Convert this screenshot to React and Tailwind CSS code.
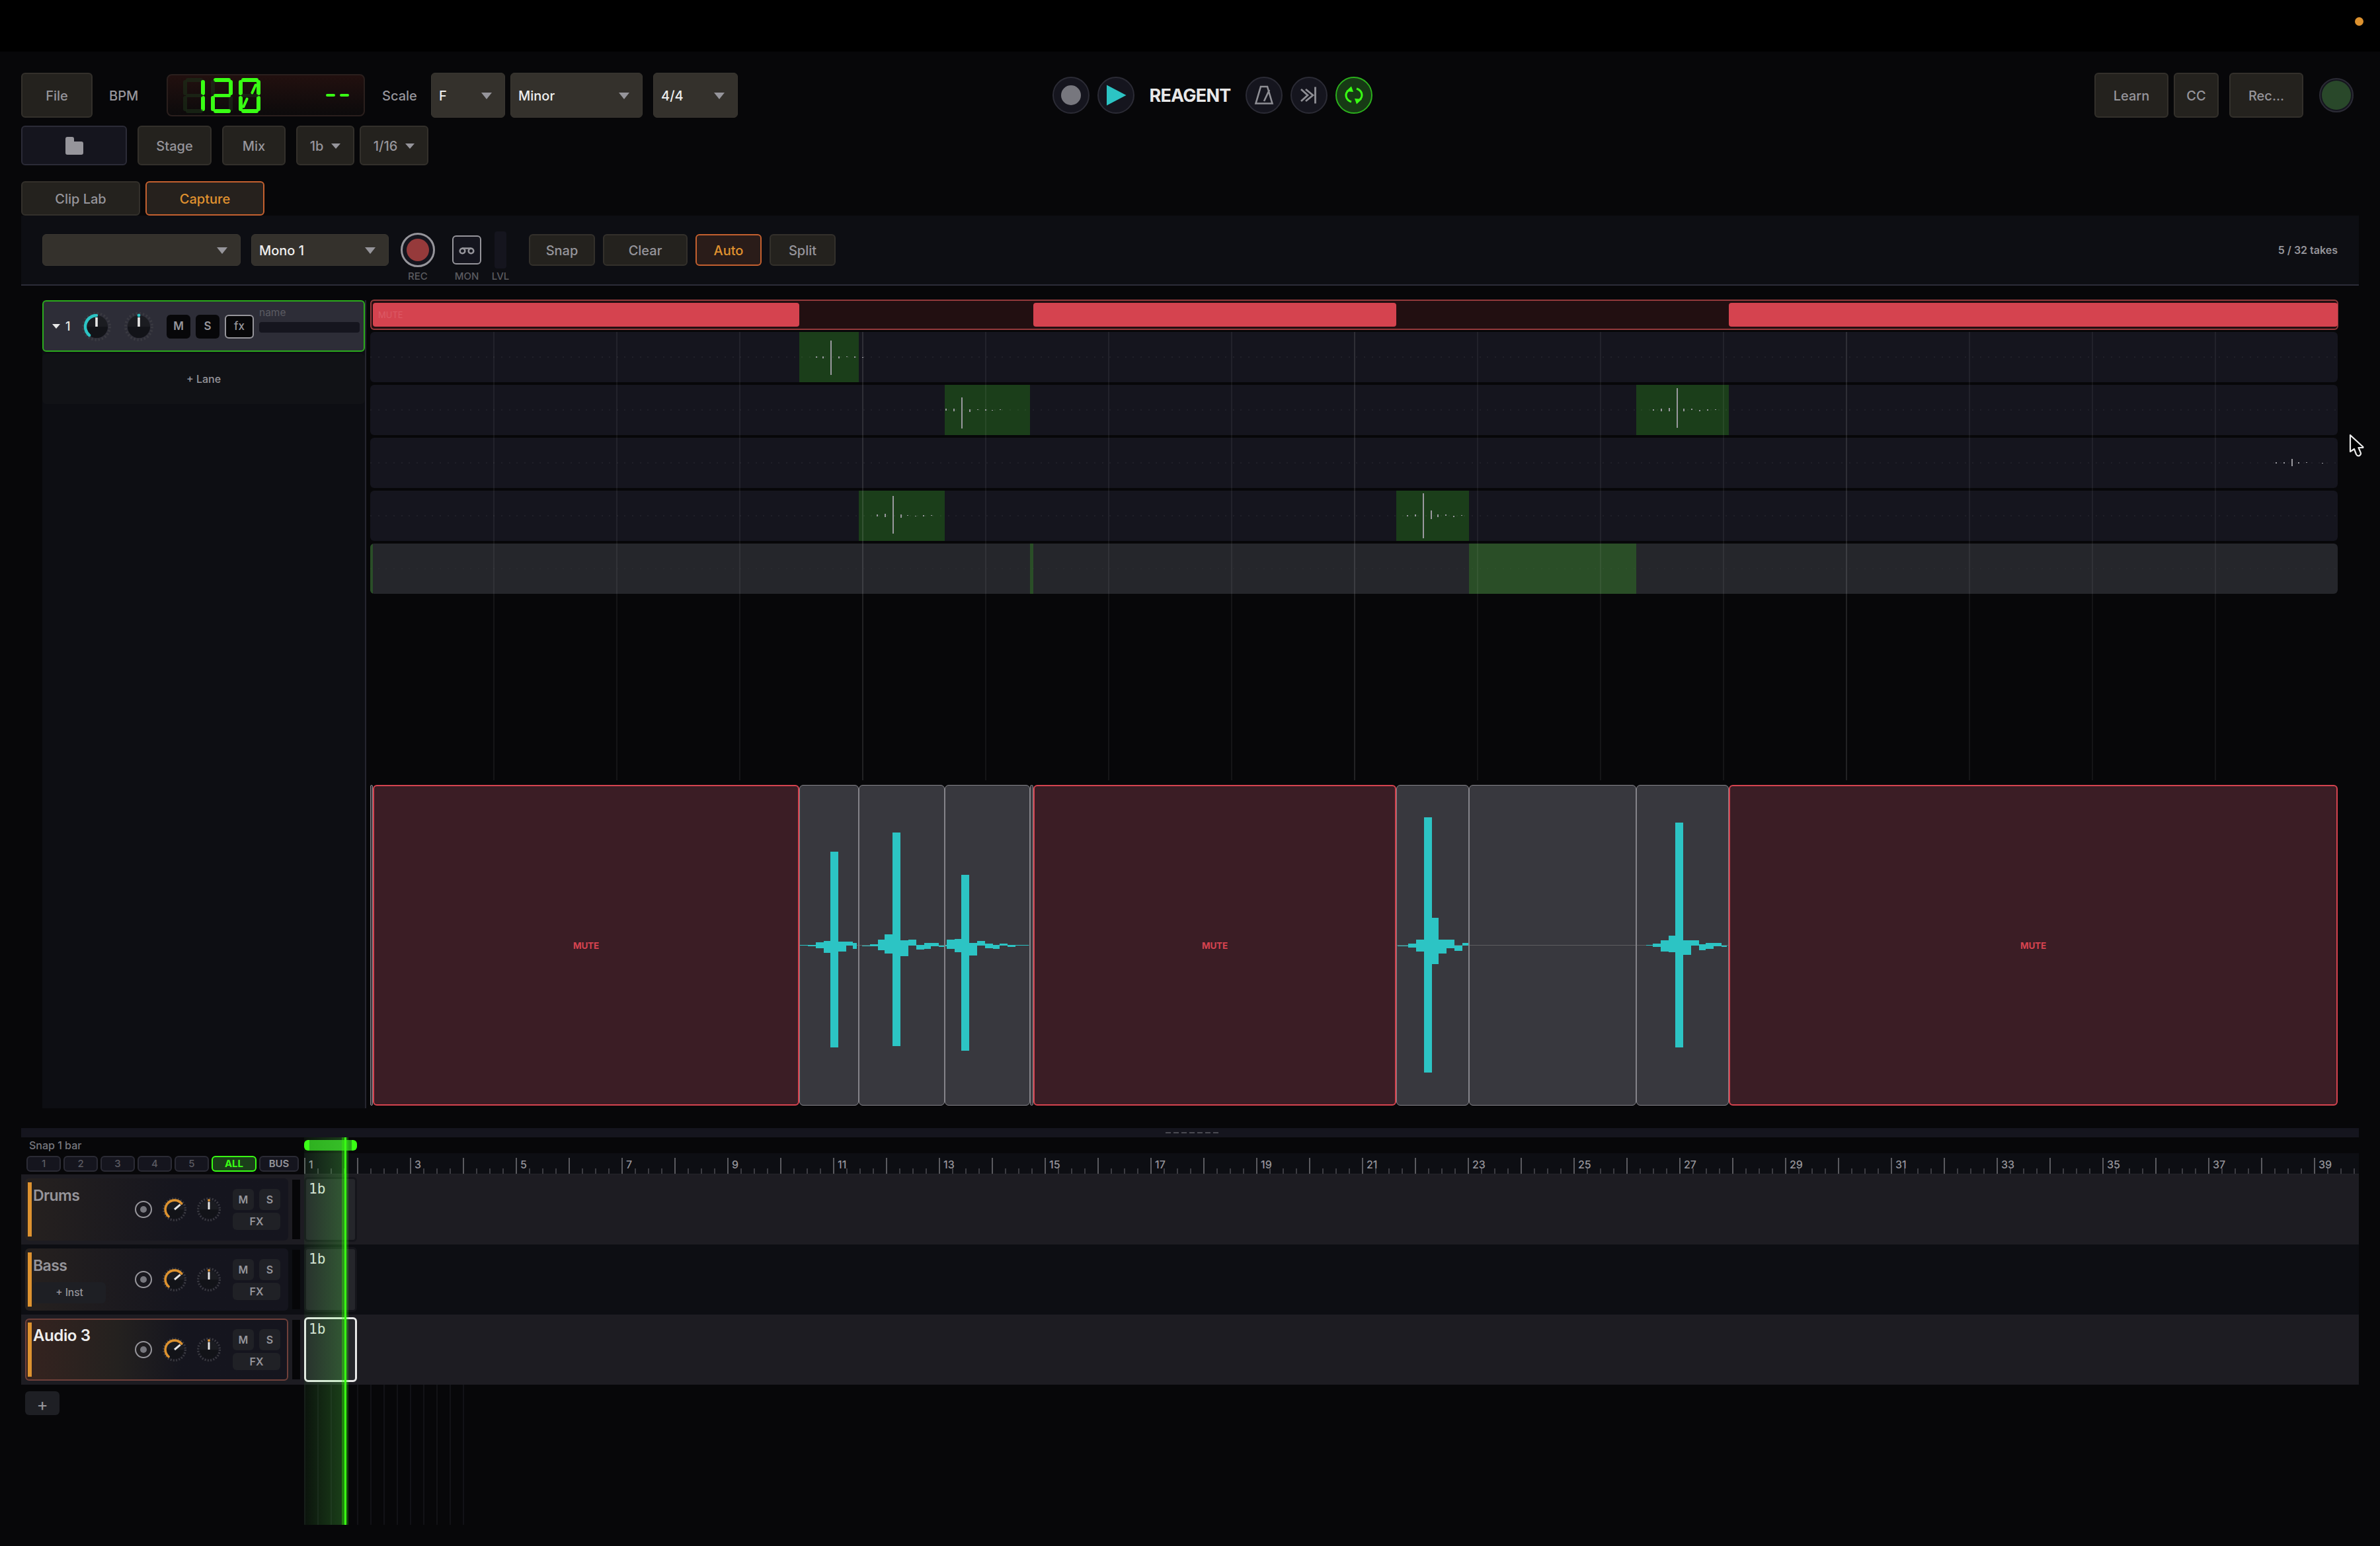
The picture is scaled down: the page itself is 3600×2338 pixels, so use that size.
// widths of the comped regions along the capture timeline
const REGIONS = [
  { width: 4 },
  { width: 645, muted: true },
  { width: 90 },
  { width: 130 },
  { width: 129 },
  { width: 5 },
  { width: 549, muted: true },
  { width: 110 },
  { width: 253 },
  { width: 140 },
  { width: 921, muted: true },
]

const LANE_START = 560
const LANE_WIDTH = 2976

// marks are [x, top offset, height], offsets measured from the lane centre
const TAKES = [
  {
    active: [2],
    marks: [[1234, -1, 2], [1244, -1, 3], [1256, -25, 52], [1268, -1, 3], [1280, -1, 1], [1292, -1, 2], [1304, 0, 1]],
  },
  {
    active: [4, 9],
    marks: [
      [1430, -2, 3], [1442, -2, 4], [1454, -19, 47], [1466, -1, 4], [1478, -1, 1], [1490, -1, 2], [1500, 0, 1], [1512, -1, 1],
      [2500, -1, 2], [2512, -2, 4], [2524, -3, 5], [2536, -33, 60], [2546, -2, 4], [2558, -2, 2], [2570, 0, 2], [2582, -1, 2], [2594, -1, 1],
    ],
  },
  {
    active: [],
    marks: [[3442, -1, 2], [3454, -1, 2], [3466, -6, 11], [3476, -1, 2], [3488, -1, 1], [3512, 0, 1]],
  },
  {
    active: [3, 7],
    marks: [
      [1326, -2, 3], [1338, -3, 5], [1350, -30, 57], [1362, -2, 5], [1372, -1, 1], [1384, 0, 1], [1396, -1, 2], [1408, -1, 1],
      [2128, -1, 2], [2140, -2, 3], [2152, -34, 68], [2164, -8, 13], [2174, -2, 4], [2186, -2, 2], [2198, 0, 2], [2210, -1, 1],
    ],
  },
  { active: [0, 5, 8], marks: [], bright: true },
]

// waveform blocks are [from, to, top, bottom]
const WAVES = {
  2: [
    [1208, 1222, 1429, 1430], [1222, 1234, 1429, 1431], [1234, 1246, 1425, 1434], [1246, 1256, 1423, 1441],
    [1256, 1268, 1288, 1584], [1268, 1280, 1424, 1439], [1280, 1290, 1424, 1430], [1290, 1296, 1426, 1435],
  ],
  3: [
    [1304, 1316, 1430, 1431], [1316, 1328, 1428, 1431], [1328, 1338, 1421, 1437], [1338, 1350, 1413, 1442],
    [1350, 1362, 1259, 1582], [1362, 1374, 1422, 1446], [1374, 1386, 1421, 1430], [1386, 1398, 1429, 1436],
    [1398, 1408, 1426, 1435], [1408, 1420, 1426, 1431], [1420, 1429, 1430, 1432],
  ],
  4: [
    [1429, 1432, 1429, 1431], [1432, 1444, 1421, 1435], [1444, 1454, 1420, 1440], [1454, 1466, 1323, 1589],
    [1466, 1478, 1426, 1445], [1478, 1490, 1423, 1430], [1490, 1502, 1427, 1434], [1502, 1512, 1429, 1435],
    [1512, 1524, 1427, 1430], [1524, 1536, 1429, 1432], [1536, 1556, 1429, 1430],
  ],
  7: [
    [2114, 2130, 1430, 1431], [2130, 2142, 1427, 1433], [2142, 2154, 1421, 1439], [2154, 2166, 1236, 1622],
    [2166, 2176, 1388, 1458], [2176, 2188, 1421, 1442], [2188, 2200, 1421, 1434], [2200, 2212, 1430, 1438],
    [2212, 2222, 1426, 1430],
  ],
  8: [],
  9: [
    [2490, 2500, 1429, 1430], [2500, 2512, 1427, 1432], [2512, 2524, 1422, 1439], [2524, 2534, 1415, 1440],
    [2534, 2546, 1244, 1584], [2546, 2558, 1422, 1444], [2558, 2570, 1422, 1430], [2570, 2580, 1428, 1437],
    [2580, 2592, 1426, 1435], [2592, 2604, 1426, 1431], [2604, 2612, 1430, 1432],
  ],
}

const regionStart = (index) => REGIONS.slice(0, index).reduce((x, region) => x + region.width, LANE_START)

const TRACKS = [
  { name: "Drums" },
  { name: "Bass", inst: true },
  { name: "Audio 3", selected: true },
]

const Button = ({ className = "", children }) => (
  <button
    className={`flex items-center justify-center rounded-md border-2 border-[#33302b] bg-[#24221e] pt-[2px] text-[20px] font-medium text-[#96959b] ${className}`}
  >
    {children}
  </button>
)

const Caret = ({ className = "w-4 h-[10px] fill-[#96959b]" }) => (
  <svg className={`shrink-0 ${className}`} viewBox="0 0 16 10" preserveAspectRatio="none">
    <path d="M0 0h16L8 10z" />
  </svg>
)

const Select = ({ value, className = "" }) => (
  <div
    className={`flex items-center justify-between rounded-md border border-[#3a3731] bg-[#34312c] pt-[2px] pl-[11px] pr-[19px] text-[20px] font-medium text-[#eeeeee] ${className}`}
  >
    <span>{value}</span>
    <Caret />
  </div>
)

const RoundButton = ({ className = "border-[#2b2b35] bg-[#15151e]", children }) => (
  <button className={`flex h-14 w-14 items-center justify-center rounded-full border-2 ${className}`}>
    <svg width="44" height="44" viewBox="-22 -22 44 44" fill="none">
      {children}
    </svg>
  </button>
)

const SEGMENT_CLASSES = {
  a: "left-[4px] top-0 h-[6px] w-[26px]",
  b: "right-0 top-[3px] h-[23px] w-[6px]",
  c: "right-0 bottom-[3px] h-[23px] w-[6px]",
  d: "left-[4px] bottom-0 h-[6px] w-[26px]",
  e: "left-0 bottom-[3px] h-[23px] w-[6px]",
  f: "left-0 top-[3px] h-[23px] w-[6px]",
  g: "left-[4px] top-[24px] h-[5px] w-[26px]",
}

const DIGITS = { 0: "abcdef", 1: "bc", 2: "abdeg" }

const LcdDigit = ({ value }) => (
  <div className="relative h-[53px] w-[33px]">
    {Object.keys(SEGMENT_CLASSES).map((key) => (
      <span
        key={key}
        className={`absolute rounded-[3px] ${SEGMENT_CLASSES[key]} ${DIGITS[value].includes(key) ? "bg-[#39ff14]" : "bg-[#1c3019]/60"}`}
      />
    ))}
    {value === "0" && (
      <>
        <span className="absolute left-[21px] top-[8px] h-[17px] w-[4px] rotate-[24deg] rounded-sm bg-[#39ff14]" />
        <span className="absolute left-[8px] top-[29px] h-[17px] w-[4px] rotate-[24deg] rounded-sm bg-[#39ff14]" />
      </>
    )}
  </div>
)

const Lcd = () => (
  <div
    role="img"
    aria-label="120"
    className="flex h-16 w-[300px] items-center justify-between rounded-lg border-2 border-[#2a1f1d] bg-linear-to-b from-[#22100f] to-[#0c0a0b] pl-[23px] pr-[22px]"
  >
    <div className="flex gap-[9px]">
      {["1", "2", "0"].map((digit) => (
        <LcdDigit key={digit} value={digit} />
      ))}
    </div>
    <div className="flex gap-[7px]">
      <span className="h-[4px] w-[14px] rounded-sm bg-[#39ff14]" />
      <span className="h-[4px] w-[14px] rounded-sm bg-[#39ff14]" />
    </div>
  </div>
)

const polar = (angle, radius) => {
  const rad = (angle * Math.PI) / 180
  return [Math.sin(rad) * radius, -Math.cos(rad) * radius]
}

const Knob = ({ size, angle, color, centered }) => {
  const [sx, sy] = polar(-140, 17)
  const [ex, ey] = polar(angle, 17)
  const [px, py] = polar(angle, 14)
  return (
    <svg width={size} height={size} viewBox="-22 -22 44 44" fill="none" className="shrink-0">
      <circle r="20" stroke="#3a3a41" strokeWidth="4" strokeDasharray="2.4 2.84" />
      <circle r="17" fill="#1b1c21" />
      <path d="M-17 0A17 17 0 0 0 17 0z" fill="#121318" />
      {centered ? (
        <circle cy="-17" r="2.4" fill={color} />
      ) : (
        <path
          d={`M${sx} ${sy}A17 17 0 ${angle > 40 ? 1 : 0} 1 ${ex} ${ey}`}
          stroke={color}
          strokeWidth="4.4"
          strokeLinecap="round"
        />
      )}
      <path d={`M0 0L${px} ${py}`} stroke="#e6e6e6" strokeWidth="3.6" />
    </svg>
  )
}

const Toolbar = () => (
  <div className="mt-8 grid h-[68px] grid-cols-[1560px_1fr_auto] items-center">
    <div className="flex items-center">
      <Button className="h-[68px] w-[108px]">File</Button>
      <span className="w-[112px] pt-[2px] pl-[25px] text-[20px] font-medium text-[#96959b]">BPM</span>
      <Lcd />
      <span className="w-[100px] pt-[2px] pl-[26px] text-[20px] font-medium text-[#96959b]">Scale</span>
      <Select value="F" className="h-[68px] w-[112px]" />
      <Select value="Minor" className="ml-2 h-[68px] w-[200px]" />
      <Select value="4/4" className="ml-4 h-[68px] w-[128px]" />
    </div>

    <div className="flex items-center">
      <RoundButton>
        <circle r="15" fill="#77777e" />
      </RoundButton>
      <div className="ml-3">
        <RoundButton>
          <path d="M-14 -15.5L15.5 0L-14 15.5z" fill="#2cc4c4" />
        </RoundButton>
      </div>
      <span className="w-[168px] pt-[2px] text-center text-[27px] font-bold tracking-[-0.8px] text-[#e8e8e8]">REAGENT</span>
      <div className="flex gap-3">
        <RoundButton>
          <path d="M-5 -13H5L12.5 12.5H-12.5zM8 -8L0 9" stroke="#8f8f95" strokeWidth="2.6" />
        </RoundButton>
        <RoundButton>
          <path d="M-12 -9L-2 0L-12 9M-5 -9L6 0L-5 9M9.5 -12.5V12.5" stroke="#8f8f95" strokeWidth="2.8" />
        </RoundButton>
        <RoundButton className="border-[#2bb01c] bg-[#173a15]">
          <g stroke="#39ff14" strokeWidth="3">
            <path d="M-4 10C-13 7 -15 -3 -7 -8" />
            <path d="M4 -10C13 -7 15 3 7 8" />
          </g>
          <path d="M-12 -6L-4 -13.5L-1 -5zM12 6L4 13.5L1 5z" fill="#39ff14" />
        </RoundButton>
      </div>
    </div>

    <div className="flex items-center pr-2">
      <Button className="h-[68px] w-[112px]">Learn</Button>
      <Button className="ml-2 h-[68px] w-[68px]">CC</Button>
      <Button className="ml-4 h-[68px] w-[112px]">Rec...</Button>
      <span className="ml-6 h-[52px] w-[52px] rounded-full border-2 border-[#2b2b35] bg-[#15151e] p-[2px]">
        <span className="block h-full w-full rounded-full bg-[#29482a]" />
      </span>
    </div>
  </div>
)

const ViewBar = () => (
  <div className="mt-3 flex h-[60px]">
    <button className="flex w-[160px] items-center justify-center rounded-md border-2 border-[#2b2b37] bg-[#15151e]">
      <svg width="27" height="27" viewBox="0 0 27 27" fill="#96959b">
        <path d="M3 0H10Q13 0 13 3V7H24Q27 7 27 10V24Q27 27 24 27H3Q0 27 0 24V3Q0 0 3 0z" />
      </svg>
    </button>
    <Button className="ml-4 w-[112px]">Stage</Button>
    <Button className="ml-4 w-[96px]">Mix</Button>
    <Button className="ml-4 w-[88px] gap-3">
      1b <Caret className="h-2 w-[14px] fill-[#96959b]" />
    </Button>
    <Button className="ml-2 w-[104px] gap-3">
      1/16 <Caret className="h-2 w-[14px] fill-[#96959b]" />
    </Button>
  </div>
)

const Labeled = ({ label, className, children }) => (
  <div className={`flex flex-col items-center ${className}`}>
    <div className="flex h-14 items-center">{children}</div>
    <span className="mt-[2px] text-[15px] leading-5 font-medium text-[#5b5b60]">{label}</span>
  </div>
)

const CaptureBar = () => (
  <div className="flex h-[106px] items-start border-b-2 border-[#2c2c38] bg-[#0d0e13] px-8 pt-6">
    <Select value="" className="mt-1 h-12 w-[300px]" />
    <Select value="Mono 1" className="mt-1 ml-4 h-12 w-[208px]" />
    <Labeled label="REC" className="ml-[18px] w-[52px]">
      <span className="flex h-[52px] w-[52px] items-center justify-center rounded-full border-[3px] border-[#96959b] bg-[#15151e]">
        <span className="h-[34px] w-[34px] rounded-full bg-[#963a3b]" />
      </span>
    </Labeled>
    <Labeled label="MON" className="ml-[26px] w-11">
      <span className="flex h-11 w-11 items-center justify-center rounded-md border-2 border-[#96959b] bg-[#15151e]">
        <svg width="26" height="14" viewBox="-13 -7 26 14" fill="none" stroke="#96959b" strokeWidth="2.6">
          <circle cx="-6.5" cy="1.5" r="3.8" />
          <circle cx="6.5" cy="1.5" r="3.8" />
          <path d="M-7 -2.4H7" />
        </svg>
      </span>
    </Labeled>
    <Labeled label="LVL" className="ml-[13px] w-[32px]">
      <span className="h-14 w-[18px] rounded-sm bg-[#15151e]" />
    </Labeled>
    <Button className="mt-1 ml-[27px] h-12 w-[100px]">Snap</Button>
    <Button className="mt-1 ml-3 h-12 w-[128px]">Clear</Button>
    <button className="mt-1 ml-3 h-12 w-[100px] rounded-md border-2 border-[#c4602f] bg-[#2a1c19] pt-[2px] text-[20px] font-medium text-[#e0922f]">
      Auto
    </button>
    <Button className="mt-1 ml-3 h-12 w-[100px]">Split</Button>
    <span className="mt-[18px] ml-auto text-[16px] leading-5 font-semibold text-[#96959b]">5 / 32 takes</span>
  </div>
)

const LaneHeader = () => (
  <div className="flex h-[78px] items-center rounded-md border-2 border-[#2bab1c] bg-[#2d2d37] pt-px pl-[13px]">
    <Caret className="h-[7px] w-[12px] fill-[#e8e8e8]" />
    <span className="ml-2 w-[25px] text-[18px] font-medium text-[#e8e8e8]">1</span>
    <span className="w-16"><Knob size={44} angle={0} color="#2cc4c4" /></span>
    <Knob size={44} angle={0} color="#2cc4c4" centered />
    <button className="ml-[20px] h-9 w-9 rounded-md bg-[#070709] text-[17px] font-semibold text-[#96959b]">M</button>
    <button className="ml-2 h-9 w-9 rounded-md bg-[#070709] text-[17px] font-semibold text-[#96959b]">S</button>
    <button className="ml-2 h-9 w-11 rounded-md border-2 border-[#96959b] bg-[#070709] text-[17px] font-medium text-[#96959b]">
      fx
    </button>
    <div className="ml-2 flex h-full w-[152px] flex-col pt-[7px]">
      <span className="text-[15.5px] leading-[18px] text-[#5b5b62]">name</span>
      <span className="mt-[5px] h-4 rounded-sm bg-[#15151e]" />
    </div>
  </div>
)

const TakeLane = ({ take }) => (
  <div className={`relative flex h-[76px] overflow-hidden rounded-md ${take.bright ? "bg-[#25262b]" : "bg-[#15151e]"}`}>
    {REGIONS.map((region, index) => (
      <span
        key={index}
        className={take.active.includes(index) ? (take.bright ? "bg-[#2a4e27]" : "bg-[#1b3e1a]") : ""}
        style={{ width: region.width }}
      />
    ))}
    <svg
      className="absolute inset-0"
      width={LANE_WIDTH}
      height="76"
      viewBox={`${LANE_START} -38 ${LANE_WIDTH} 76`}
      shapeRendering="crispEdges"
    >
      <path d="M560 0H3536" stroke="#fff" strokeOpacity={take.bright ? 0.02 : 0.05} strokeWidth="2" strokeDasharray="2 9.65" />
      {take.marks.map(([x, y, height]) => (
        <rect key={x} x={x} y={y} width="2" height={height} fill="#9a999f" />
      ))}
    </svg>
  </div>
)

const TakeLanes = () => (
  <div className="relative h-[678px]">
    <div className="flex flex-col gap-1">
      {TAKES.map((take, index) => (
        <TakeLane key={index} take={take} />
      ))}
    </div>
    {/* beat lines run over the lanes and on below them */}
    <div className="absolute inset-0 flex pl-[186px]">
      {Array.from({ length: 15 }, (_, index) => (
        <span key={index} className={`w-[186px] border-l-2 ${index % 4 === 3 ? "border-white/11" : "border-white/6"}`} />
      ))}
    </div>
  </div>
)

const MuteLane = () => (
  <div className="flex h-[46px] w-[2977px] items-center rounded-md bg-[#220f11] shadow-[inset_0_0_0_2px_#933a3c]">
    {REGIONS.map((region, index) => (
      <span
        key={index}
        className={`h-9 shrink-0 rounded-sm indent-2 text-[13px] leading-9 text-[#dc5a66] ${region.muted ? "bg-[#d5434f]" : ""}`}
        style={{ width: region.width }}
      >
        {index === 1 && "MUTE"}
      </span>
    ))}
  </div>
)

const CompRow = () => (
  <div className="mt-[7px] flex h-[485px] w-[2977px]">
    {REGIONS.map((region, index) =>
      region.muted ? (
        <div
          key={index}
          className="flex items-center justify-center rounded-md border-2 border-[#d5434f] bg-[#3b1d25] pt-px text-[13.5px] font-bold tracking-[-0.2px] text-[#d5434f]"
          style={{ width: region.width }}
        >
          MUTE
        </div>
      ) : (
        <div
          key={index}
          className="relative overflow-hidden rounded-md border border-[#85848a] bg-[#38383e]"
          style={{ width: region.width }}
        >
          {WAVES[index] && (
            <svg
              className="absolute -top-px -left-px"
              width={region.width}
              height="485"
              viewBox={`${regionStart(index)} 1187 ${region.width} 485`}
              shapeRendering="crispEdges"
            >
              <rect x={regionStart(index)} y="1429" width={region.width} height="1" fill="#5d5d60" />
              {WAVES[index].map(([from, to, top, bottom]) => (
                <rect key={from} x={from} y={top} width={to - from} height={bottom - top} fill="#2cc4c4" />
              ))}
            </svg>
          )}
        </div>
      )
    )}
  </div>
)

const CapturePanel = () => (
  <div className="flex h-[1274px] px-8 pt-[21px]">
    <div className="mt-px h-[1222px] w-[490px] border-r-2 border-[#25252f] bg-[#0d0e13]">
      <LaneHeader />
      <div className="mt-[3px] flex h-[76px] items-center justify-center rounded-md bg-[#111216] text-[16px] font-medium text-[#96959b]">
        + Lane
      </div>
    </div>
    <div className="ml-[6px] w-[2976px]">
      <MuteLane />
      <div className="h-[3px]" />
      <TakeLanes />
      <CompRow />
    </div>
  </div>
)

const TrackButton = ({ className, children }) => (
  <button className={`flex items-center justify-center rounded-md bg-[#202126] text-[16px] font-semibold text-[#96959b] ${className}`}>
    {children}
  </button>
)

const TrackHeader = ({ track }) => (
  <div
    className={`flex h-[94px] w-[398px] rounded-md border-2 py-1 pl-[2px] ${
      track.selected
        ? "border-[#70403a] bg-linear-to-r from-[#35231f] via-[#24211f] via-35% to-[#15151e] to-60%"
        : "border-transparent bg-linear-to-r from-[#26211f] to-[#15151e] to-60% bg-origin-border"
    }`}
  >
    <span className="w-[6px] bg-[#dd922f]" />
    <div className="flex w-[155px] flex-col pt-[5px] pl-[2px]">
      <span
        className={`leading-[30px] font-semibold ${track.selected ? "text-[24px] tracking-[-0.4px] text-[#eeeeee]" : "text-[23px] tracking-[-0.6px] text-[#96959b]"}`}
      >
        {track.name}
      </span>
      {track.inst && (
        <button className="mt-[10px] h-8 w-[110px] rounded-md bg-[#1e1f24] text-[15.5px] font-medium text-[#96959b]">
          + Inst
        </button>
      )}
    </div>
    <div className="flex items-center">
      <svg width="28" height="28" viewBox="-14 -14 28 28" fill="none">
        <circle r="12" stroke="#96959b" strokeWidth="2" />
        <circle r="5" fill="#77777e" />
      </svg>
      <span className="ml-[15px] h-9 w-9"><Knob size={36} angle={50} color="#dd922f" /></span>
      <span className="ml-4 h-9 w-9"><Knob size={36} angle={0} color="#dd922f" centered /></span>
    </div>
    <div className="ml-[18px] flex w-[72px] flex-wrap content-start justify-between gap-y-1 pt-[10px]">
      <TrackButton className="h-8 w-8">M</TrackButton>
      <TrackButton className="h-8 w-8">S</TrackButton>
      <TrackButton className="h-[26px] w-[72px]">FX</TrackButton>
    </div>
  </div>
)

const TrackRow = ({ track, index }) => (
  <div className={`flex h-[106px] items-center pl-[6px] ${index % 2 ? "bg-[#0d0e13]" : "bg-[#1d1c22]"}`}>
    <TrackHeader track={track} />
    <span className="ml-[6px] h-[90px] w-[12px] bg-[#060608]" />
    <div
      className={`ml-[6px] h-[98px] w-[80px] rounded-md bg-[#25262b] pl-[4px] font-['DejaVu_Sans_Mono',monospace] text-[21px] leading-[30px] text-[#e0e0e0] ${
        track.selected ? "border-[3px] border-[#e8e8e8]" : "border-[3px] border-[#15151b]"
      }`}
    >
      1b
    </div>
  </div>
)

const GROUPS = ["1", "2", "3", "4", "5"]

const Ruler = () => (
  <div className="w-[3108px] overflow-hidden">
    <div className="flex h-6 items-center">
      <div className="h-4 w-20 rounded-md border-x-8 border-[#39ff14] bg-[#2bab1c]" />
    </div>
    <div className="flex h-8 items-end border-b border-[#25252b] bg-[#0d0e13]">
      {Array.from({ length: 39 }, (_, index) => (
        <div key={index} className="flex h-6 w-20 shrink-0 items-end border-l-2 border-[#5a5a5f]">
          <span className="-mr-[18px] h-6 w-[18px] pl-[5px] text-[16px] leading-[21px] font-medium text-[#96959b]">
            {index % 2 === 0 ? index + 1 : ""}
          </span>
          {[0, 1, 2].map((tick) => (
            <span key={tick} className="h-2 w-5 border-r-2 border-[#3c3c42]" />
          ))}
        </div>
      ))}
    </div>
  </div>
)

const Arranger = () => (
  <div className="relative h-[586px]">
    <div className="flex h-14">
      <div className="w-[428px]">
        <div className="h-7 pl-3 text-[16px] leading-6 font-medium text-[#77777e]">Snap 1 bar</div>
        <div className="flex h-6 gap-1 pl-2 text-[15px]">
          {GROUPS.map((group) => (
            <button key={group} className="w-[52px] rounded-md border-2 border-[#2b2b35] bg-[#15151e] leading-5 font-medium text-[#5b5b62]">
              {group}
            </button>
          ))}
          <button className="w-[68px] rounded-md border-2 border-[#39ff14] bg-[#1b3e1a] leading-5 font-bold text-[#39ff14]">ALL</button>
          <button className="w-[60px] rounded-md border-2 border-[#2b2b35] bg-[#15151e] leading-5 font-semibold text-[#96959b]">BUS</button>
        </div>
      </div>
      <Ruler />
    </div>
    {TRACKS.map((track, index) => (
      <TrackRow key={track.name} track={track} index={index} />
    ))}
    <div className="flex h-[212px]">
      <div className="w-[428px] pt-[10px] pl-[6px]">
        <button className="flex h-9 w-[52px] items-center justify-center rounded-md bg-[#1e1f24] pt-[3px] text-[26px] leading-none text-[#96959b]">
          +
        </button>
      </div>
      {Array.from({ length: 13 }, (_, index) => (
        <span key={index} className="w-5 border-l-2 border-[#121216]" />
      ))}
    </div>
    {/* playhead with its trail */}
    <div className="absolute inset-y-0 left-[428px] flex">
      <span className="w-[57px] bg-linear-to-r from-[#5cff50]/5 to-[#5cff50]/22" />
      <span className="w-1 bg-[#39ff14]/50" />
      <span className="w-[3px] bg-[#39ff14]" />
      <span className="w-[3px] bg-[#39ff14]/25" />
    </div>
  </div>
)

const Grip = () => (
  <div className="flex h-[14px] items-center justify-center gap-1 bg-[#15151e] pl-[5px]">
    {Array.from({ length: 7 }, (_, index) => (
      <span key={index} className="h-[2px] w-2 bg-[#4a4a52]" />
    ))}
  </div>
)

const App = () => (
  <div className="relative h-[2338px] w-[3600px] overflow-hidden bg-[#070709] font-[Inter,sans-serif]">
    <div className="flex h-[78px] justify-end bg-black pt-[26px] pr-[25px]">
      <span className="h-[13px] w-[13px] rounded-full bg-[#dd922f]" />
    </div>
    <div className="px-8">
      <Toolbar />
      <ViewBar />
      <div className="mt-6 flex h-[52px] gap-2">
        <Button className="w-[180px]">Clip Lab</Button>
        <button className="w-[180px] rounded-md border-2 border-[#c4602f] bg-[#26211d] pt-[2px] text-[20px] font-medium text-[#e0922f]">
          Capture
        </button>
      </div>
      <CaptureBar />
      <CapturePanel />
      <Grip />
      <Arranger />
    </div>
    <svg className="absolute top-[655px] left-[3552px]" width="26" height="38" viewBox="0 0 26 38">
      <path
        d="M3 3V28L9 24L12 32Q14 35.5 17 34Q20 32 18.500 29L15.500 22H22Q23 21.500 22 20.500z"
        fill="#000"
        stroke="#e8e8e8"
        strokeWidth="2.200"
        strokeLinejoin="round"
      />
    </svg>
  </div>
)

export default App
